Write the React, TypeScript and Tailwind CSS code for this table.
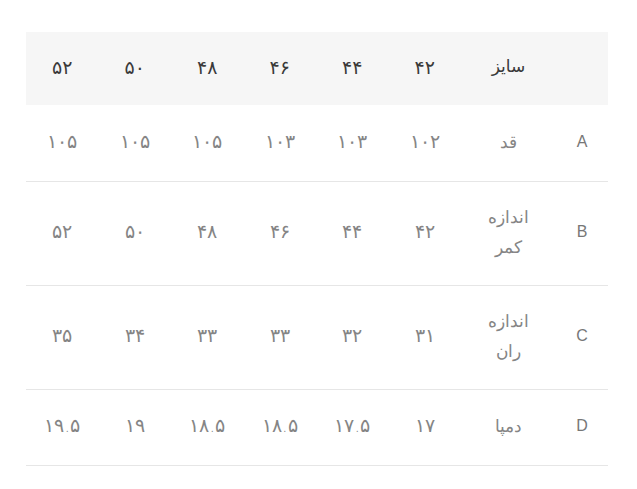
import React from "react";

const sizes = ["۴۲", "۴۴", "۴۶", "۴۸", "۵۰", "۵۲"];

const rows = [
  { key: "A", label: ["قد"], values: ["۱۰۲", "۱۰۳", "۱۰۳", "۱۰۵", "۱۰۵", "۱۰۵"] },
  { key: "B", label: ["اندازه", "کمر"], values: ["۴۲", "۴۴", "۴۶", "۴۸", "۵۰", "۵۲"] },
  { key: "C", label: ["اندازه", "ران"], values: ["۳۱", "۳۲", "۳۳", "۳۳", "۳۴", "۳۵"] },
  { key: "D", label: ["دمپا"], values: ["۱۷", "۱۷.۵", "۱۸.۵", "۱۸.۵", "۱۹", "۱۹.۵"] },
];

const App = () => {
  return (
    <div className="min-h-screen w-full bg-white pt-[32px] pl-[26px]">
      <table
        dir="rtl"
        className="w-[582px] table-fixed border-collapse text-center font-['DejaVu_Sans',sans-serif] text-[17px] font-light"
      >
        <colgroup>
          <col className="w-[52px]" />
          <col className="w-[95px]" />
          {sizes.map((s, i) => (
            <col key={i} />
          ))}
        </colgroup>
        <thead>
          <tr className="bg-[#f6f6f6] text-[#3a3a3a]">
            <th className="h-[73px] p-0 pb-[3px] font-normal"></th>
            <th className="h-[73px] p-0 pb-[3px] font-normal">سایز</th>
            {sizes.map((s, i) => (
              <th key={i} className="h-[73px] p-0 pb-[3px] text-[19px] font-normal">
                {s}
              </th>
            ))}
          </tr>
        </thead>
        <tbody className="text-[#858585]">
          {rows.map((row) => {
            const h = row.label.length > 1 ? "h-[104px]" : "h-[76px]";
            return (
              <tr key={row.key} className="border-b border-[#e6e6e6]">
                <td className={`${h} p-0 pb-[2px] font-['Liberation_Sans',sans-serif] text-[16px] text-[#777]`}>
                  {row.key}
                </td>
                <td className={`${h} p-0 pb-[2px] leading-[30px]`}>
                  {row.label.map((l, i) => (
                    <div key={i}>{l}</div>
                  ))}
                </td>
                {row.values.map((v, i) => (
                  <td key={i} className={`${h} p-0 pb-[3px] text-[19px]`}>
                    {v}
                  </td>
                ))}
              </tr>
            );
          })}
        </tbody>
      </table>
    </div>
  );
};

export default App;
